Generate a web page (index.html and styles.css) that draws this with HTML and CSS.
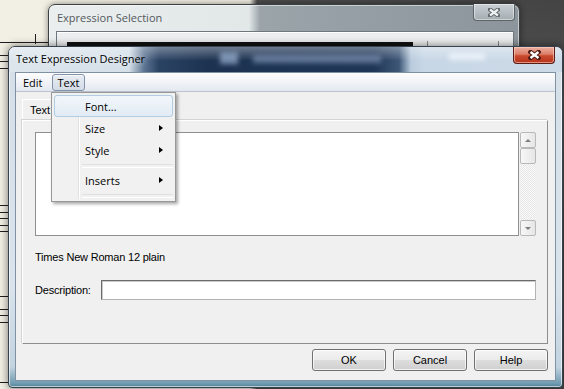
FILE: index.html
```html
<!DOCTYPE html>
<html lang="en">
<head>
  <meta charset="UTF-8" />
  <title>Text Expression Designer</title>
  <link rel="stylesheet" href="styles.css">
</head>
<body>
  <div class="desktop">
    <!-- score behind the dialogs -->
    <div class="staff staff-a"></div>
    <div class="staff staff-b"></div>
    <div class="staff staff-c"></div>
    <div class="staff-line"></div>
    <div class="stem"></div>

    <!-- Expression Selection (inactive, behind) -->
    <div class="back-win">
      <div class="back-title">Expression Selection</div>
      <div class="back-close">
        <svg width="12" height="9" viewBox="0 0 12 9"><path d="M2 1.5 L10 7.5 M10 1.5 L2 7.5" stroke="#60686d" stroke-width="4.2" stroke-linecap="square"/><path d="M2 1.5 L10 7.5 M10 1.5 L2 7.5" stroke="#eef1f2" stroke-width="2.2"/></svg>
      </div>
      <div class="back-client">
        <div class="black-bar"></div>
        <div class="tick tick-a"></div>
        <div class="tick tick-b"></div>
      </div>
    </div>

    <!-- Text Expression Designer (active) -->
    <div class="win">
      <div class="titlebar">
        <span class="title">Text Expression Designer</span>
        <div class="glass-blur blur-icon"></div>
        <div class="glass-blur blur-text"></div>
        <div class="glass-blur blur-right"></div>
        <div class="close-btn">
          <svg width="13" height="10" viewBox="0 0 13 10"><path d="M2.5 2 L10.5 8 M10.5 2 L2.5 8" stroke="#4a1a12" stroke-width="4.4" stroke-linecap="square"/><path d="M2.5 2 L10.5 8 M10.5 2 L2.5 8" stroke="#ffffff" stroke-width="2.4"/></svg>
        </div>
      </div>

      <div class="client">
        <div class="menubar">
          <span class="menu-item">Edit</span>
          <span class="menu-item open">Text</span>
        </div>

        <div class="main">
          <div class="tabs">
            <span class="tab">Text</span>
          </div>
          <div class="panel">
            <div class="editor">
              <div class="textarea"></div>
              <div class="scrollbar">
                <div class="sb-btn"><span class="arrow-up"></span></div>
                <div class="sb-btn"></div>
                <div class="sb-track"></div>
                <div class="sb-btn"><span class="arrow-down"></span></div>
              </div>
            </div>
            <div class="font-label">Times New Roman 12 plain</div>
            <div class="desc-row">
              <span class="desc-label">Description:</span>
              <div class="desc-input"></div>
            </div>
          </div>
          <div class="buttons">
            <button class="btn">OK</button>
            <button class="btn">Cancel</button>
            <button class="btn">Help</button>
          </div>
        </div>
      </div>

      <!-- open Text menu -->
      <div class="dropdown">
        <div class="gutter-line"></div>
        <div class="dd-item hot">Font...</div>
        <div class="dd-item">Size<span class="sub-arrow"></span></div>
        <div class="dd-item">Style<span class="sub-arrow"></span></div>
        <div class="dd-sep"></div>
        <div class="dd-item">Inserts<span class="sub-arrow"></span></div>
        <div class="dd-sep"></div>
      </div>
    </div>
  </div>
</body>
</html>
```

FILE: styles.css
```css
* {
  box-sizing: border-box;
}

body {
  margin: 0;
  width: 564px;
  height: 389px;
  overflow: hidden;
  font-family: 'Liberation Sans', Arial, sans-serif;
  font-size: 11px;
  color: #000;
}

.desktop {
  position: relative;
  width: 564px;
  height: 389px;
  overflow: hidden;
  background:
    radial-gradient(circle at 540px 120px, #555 0, rgba(70,70,70,0) 120px),
    linear-gradient(to right, #f2efe4 0, #eeebdf 250px, #4b4b4b 257px, #444 100%);
}

/* music staff on the left edge */
.staff {
  position: absolute;
  left: 0;
  width: 48px;
  height: 27px;
  background: repeating-linear-gradient(to bottom, #1e1e1e 0 1px, transparent 1px 6.5px);
}

.staff-a { top: 42px; }
.staff-b { top: 205px; }
.staff-c { top: 296px; }

.staff-line {
  position: absolute;
  left: 0;
  top: 382px;
  width: 10px;
  height: 1px;
  background: #1e1e1e;
}

.stem {
  position: absolute;
  left: 35px;
  top: 34px;
  width: 1px;
  height: 10px;
  background: #1e1e1e;
}

/* back window */
.back-win {
  position: absolute;
  left: 48px;
  top: 4px;
  width: 472px;
  height: 60px;
  border: 1px solid #3c4144;
  border-radius: 7px 7px 0 0;
  background: linear-gradient(to right, #eaeeee 0, #e2e7e8 200px, #9ba4a9 211px, #8c959b 100%);
  box-shadow: 0 0 6px rgba(0, 0, 0, 0.45), inset 0 0 0 1px rgba(255, 255, 255, 0.5);
}

.back-title {
  height: 26px;
  padding: 0 0 1px 8px;
  display: flex;
  align-items: center;
  font-family: 'Open Sans', sans-serif;
  font-size: 11px;
  color: #52585c;
}

.back-close {
  position: absolute;
  right: 4px;
  top: -1px;
  width: 42px;
  height: 17px;
  border: 1px solid #5d6569;
  border-top: none;
  border-radius: 0 0 4px 4px;
  background: linear-gradient(#c9d0d4, #a4adb2);
  box-shadow: inset 0 0 0 1px rgba(255, 255, 255, 0.45);
  display: flex;
  align-items: center;
  justify-content: center;
}

.back-client {
  position: relative;
  height: 30px;
  margin: 0 5px 0 7px;
  border: 1px solid #6f777c;
  border-bottom: none;
  background: #eceeef;
  box-shadow: inset 0 1px 0 #fff;
}

.black-bar {
  position: absolute;
  left: 10px;
  top: 10px;
  width: 346px;
  height: 4px;
  background: #111;
}

.tick {
  position: absolute;
  top: 9px;
  width: 1px;
  height: 8px;
  background: #8a8a8a;
}

.tick-a { left: 370px; }
.tick-b { left: 441px; }

/* front window */
.win {
  position: absolute;
  left: 8px;
  top: 46px;
  width: 555px;
  height: 342px;
  display: flex;
  flex-direction: column;
  padding: 0 6px 6px 6px;
  border: 1px solid #36434f;
  border-radius: 7px 7px 4px 4px;
  background: linear-gradient(to bottom, #d5dfe8 0, #d9e3eb 70%, #c3d4e0 94%, #6f9bb0 99%, #4f7f94 100%);
  box-shadow: 0 0 8px rgba(0, 0, 0, 0.55), inset 0 0 0 1px rgba(255, 255, 255, 0.6);
}

.titlebar {
  position: relative;
  height: 25px;
  margin: 0 -6px;
  padding: 0 0 2px 7px;
  display: flex;
  align-items: center;
  border-radius: 6px 6px 0 0;
  background:
    linear-gradient(to bottom, rgba(255, 255, 255, 0.35), rgba(255, 255, 255, 0) 55%),
    linear-gradient(to right, #dde6ed 0, #d4dfe8 120px, #5d7593 135px, #2b4363 150px, #1c3250 200px, #1f3657 365px, #3e5777 390px, #b9cbdd 402px, #c8d7e6 415px, #ccdae7 100%);
}

.title {
  position: relative;
  z-index: 1;
  font-family: 'Open Sans', sans-serif;
  font-size: 11px;
  color: #000;
  text-shadow: 0 0 6px rgba(255, 255, 255, 0.9);
}

.glass-blur {
  position: absolute;
  filter: blur(2.5px);
}

.blur-icon {
  left: 211px;
  top: 5px;
  width: 18px;
  height: 12px;
  background: rgba(150, 172, 204, 0.75);
}

.blur-text {
  left: 244px;
  top: 8px;
  width: 128px;
  height: 8px;
  background: rgba(140, 162, 194, 0.6);
}

.blur-right {
  left: 440px;
  top: 6px;
  width: 36px;
  height: 7px;
  background: rgba(240, 246, 252, 0.8);
}

.close-btn {
  position: absolute;
  left: 504px;
  top: 0;
  width: 42px;
  height: 17px;
  border: 1px solid #5b1d13;
  border-top: none;
  border-radius: 0 0 4px 4px;
  background: linear-gradient(#eab0a2 0, #dd7e68 45%, #c84a2e 55%, #b7341a 100%);
  box-shadow: inset 0 0 0 1px rgba(255, 210, 200, 0.6);
  display: flex;
  align-items: center;
  justify-content: center;
}

.client {
  flex: 1;
  display: flex;
  flex-direction: column;
  border: 1px solid #7f91a3;
  background: #f0f0f0;
}

.menubar {
  height: 19px;
  padding-left: 1px;
  display: flex;
  align-items: center;
  gap: 3px;
  border-bottom: 1px solid #bcc4d0;
  background: linear-gradient(#fdfdfe 0, #f1f3f7 50%, #e3e8f0 100%);
  font-family: 'Open Sans', sans-serif;
  font-size: 11px;
}

.menu-item {
  height: 17px;
  padding: 0 5px;
  line-height: 15px;
  border: 1px solid transparent;
  border-radius: 3px;
}

.menu-item.open {
  border-color: #8394aa;
  background: linear-gradient(#e9edf3, #d3dbe6);
  box-shadow: inset 0 1px 0 rgba(255, 255, 255, 0.6);
}

.main {
  flex: 1;
  display: flex;
  flex-direction: column;
  padding: 7px 7px 0 6px;
}

.tabs {
  height: 21px;
  display: flex;
}

.tab {
  width: 52px;
  padding-left: 7px;
  line-height: 20px;
  border: 1px solid #fff;
  border-right-color: #a6a6a6;
  border-bottom: none;
}

.panel {
  height: 224px;
  padding: 11px 11px 0 12px;
  border: 1px solid #8e8e8e;
  border-top-color: #fff;
  border-left-color: #fff;
  box-shadow: -1px -1px 0 #d4d4d4;
}

.editor {
  height: 104px;
  display: flex;
  gap: 1px;
}

.textarea {
  flex: 1;
  background: #fff;
  border: 1px solid #8f9091;
}

.scrollbar {
  width: 16px;
  display: flex;
  flex-direction: column;
}

.sb-btn {
  height: 16px;
  display: flex;
  align-items: center;
  justify-content: center;
  border: 1px solid #b9b9b9;
  border-radius: 2px;
  background: linear-gradient(to right, #f7f7f7, #e6e6e6);
}

.sb-track {
  flex: 1;
  background: repeating-conic-gradient(#f8f8f8 0 25%, #e8e8e8 0 50%) 0 0 / 2px 2px;
}

.arrow-up,
.arrow-down {
  width: 0;
  height: 0;
  border-left: 3px solid transparent;
  border-right: 3px solid transparent;
}

.arrow-up {
  border-bottom: 3px solid #7d7d7d;
}

.arrow-down {
  border-top: 3px solid #7d7d7d;
}

.font-label {
  margin-top: 15px;
  line-height: 13px;
  letter-spacing: -0.2px;
}

.desc-row {
  height: 20px;
  margin-top: 16px;
  display: flex;
  align-items: center;
}

.desc-label {
  width: 66px;
  letter-spacing: -0.2px;
}

.desc-input {
  flex: 1;
  height: 20px;
  background: #fff;
  border: 1px solid #b3b3b3;
  border-top-color: #6c6c6c;
  border-left-color: #6c6c6c;
  box-shadow: inset 1px 1px 0 #c9c9c9;
}

.buttons {
  height: 22px;
  margin-top: 5px;
  display: flex;
  justify-content: flex-end;
  gap: 7px;
}

.btn {
  width: 74px;
  height: 22px;
  padding: 0;
  border: 1px solid #707070;
  border-radius: 3px;
  background: linear-gradient(#f4f4f4 0, #ebebeb 48%, #dddddd 52%, #cfcfcf 100%);
  box-shadow: inset 0 0 0 1px rgba(255, 255, 255, 0.7);
  font-family: 'Liberation Sans', Arial, sans-serif;
  font-size: 11px;
  color: #000;
}

/* Text menu, opened over the dialog */
.dropdown {
  position: absolute;
  left: 42px;
  top: 45px;
  width: 125px;
  height: 110px;
  padding: 2px;
  border: 1px solid #979797;
  background: #f1f1f1;
  box-shadow: 2px 2px 3px rgba(0, 0, 0, 0.35);
  font-family: 'Open Sans', sans-serif;
  font-size: 11px;
}

.gutter-line {
  position: absolute;
  left: 26px;
  top: 2px;
  bottom: 2px;
  width: 2px;
  border-left: 1px solid #e0e1e1;
  border-right: 1px solid #fff;
}

.dd-item {
  position: relative;
  height: 22px;
  display: flex;
  align-items: center;
  padding-left: 30px;
  border: 1px solid transparent;
  border-radius: 3px;
}

.dd-item.hot {
  border-color: #b0cde3;
  background: linear-gradient(#f1f6fa, #e2ecf4);
}

.sub-arrow {
  margin-left: auto;
  margin-right: 9px;
  width: 0;
  height: 0;
  border-left: 4px solid #000;
  border-top: 3.5px solid transparent;
  border-bottom: 3.5px solid transparent;
}

.dd-sep {
  position: relative;
  height: 8px;
  margin-left: 28px;
}

.dd-sep::after {
  content: '';
  position: absolute;
  left: 0;
  right: 0;
  top: 3px;
  height: 2px;
  border-top: 1px solid #e0e0e0;
  border-bottom: 1px solid #fff;
}
```
